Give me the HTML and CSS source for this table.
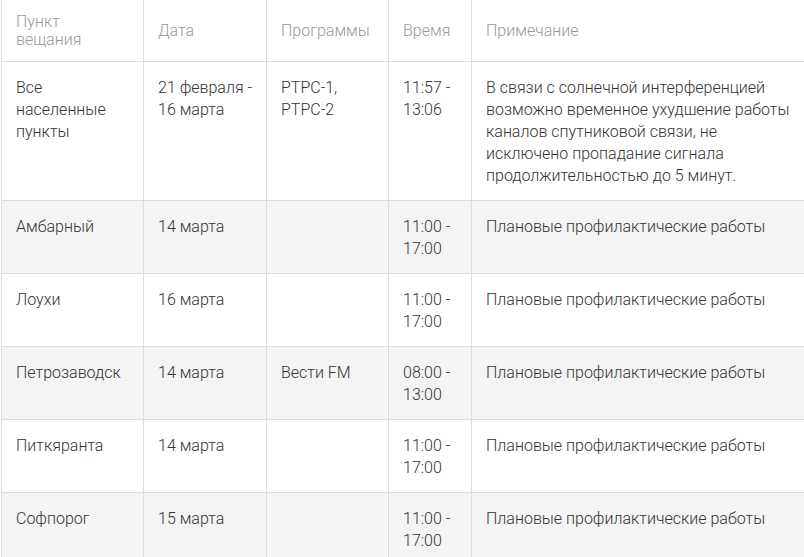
FILE: index.html
```html
<!DOCTYPE html>
<html lang="ru">
<head>
<meta charset="utf-8">
<link rel="stylesheet" href="styles.css">
</head>
<body>
<div class="wrap">
<table class="sched">
  <colgroup>
    <col class="c1"><col class="c2"><col class="c3"><col class="c4"><col class="c5">
  </colgroup>
  <thead>
    <tr>
      <th>Пункт<br>вещания</th>
      <th>Дата</th>
      <th>Программы</th>
      <th>Время</th>
      <th>Примечание</th>
    </tr>
  </thead>
  <tbody>
    <tr>
      <td>Все населенные пункты</td>
      <td>21 февраля - 16 марта</td>
      <td>РТРС-1, РТРС-2</td>
      <td>11:57 - 13:06</td>
      <td>В связи с солнечной интерференцией возможно временное ухудшение работы каналов спутниковой связи, не исключено пропадание сигнала продолжительностью до 5 минут.</td>
    </tr>
    <tr class="alt">
      <td>Амбарный</td>
      <td>14 марта</td>
      <td></td>
      <td>11:00 - 17:00</td>
      <td>Плановые профилактические работы</td>
    </tr>
    <tr>
      <td>Лоухи</td>
      <td>16 марта</td>
      <td></td>
      <td>11:00 - 17:00</td>
      <td>Плановые профилактические работы</td>
    </tr>
    <tr class="alt">
      <td>Петрозаводск</td>
      <td>14 марта</td>
      <td>Вести FM</td>
      <td>08:00 - 13:00</td>
      <td>Плановые профилактические работы</td>
    </tr>
    <tr>
      <td>Питкяранта</td>
      <td>14 марта</td>
      <td></td>
      <td>11:00 - 17:00</td>
      <td>Плановые профилактические работы</td>
    </tr>
    <tr class="alt">
      <td>Софпорог</td>
      <td>15 марта</td>
      <td></td>
      <td>11:00 - 17:00</td>
      <td>Плановые профилактические работы</td>
    </tr>
  </tbody>
</table>
</div>
</body>
</html>
```
FILE: styles.css
```css
html, body {
  margin: 0;
  padding: 0;
  background: #fff;
  overflow: hidden;
}
.wrap {
  padding-left: 1px;
}
.sched {
  border-collapse: collapse;
  table-layout: fixed;
  width: 850px;
  font-family: Roboto, "Noto Sans", sans-serif;
  font-weight: 300;
  font-size: 16px;
  color: #333;
}
.c1 { width: 142px; }
.c2 { width: 123px; }
.c3 { width: 122px; }
.c4 { width: 83px; }
.c5 { width: 380px; }
.sched th {
  font-weight: 300;
  font-size: 16px;
  line-height: 18px;
  color: #999;
  text-align: left;
  vertical-align: middle;
  padding: 13px 10px 12px 14px;
  border-left: 1px solid #ddd;
  border-bottom: 1px solid #ddd;
}
.sched td {
  line-height: 22px;
  vertical-align: top;
  padding: 15px 10px 13px 14px;
  border-left: 1px solid #ddd;
  border-bottom: 1px solid #ddd;
}
.sched td:last-child {
  padding-right: 50px;
}
.sched tr.alt td {
  background: #f4f4f4;
}
```
